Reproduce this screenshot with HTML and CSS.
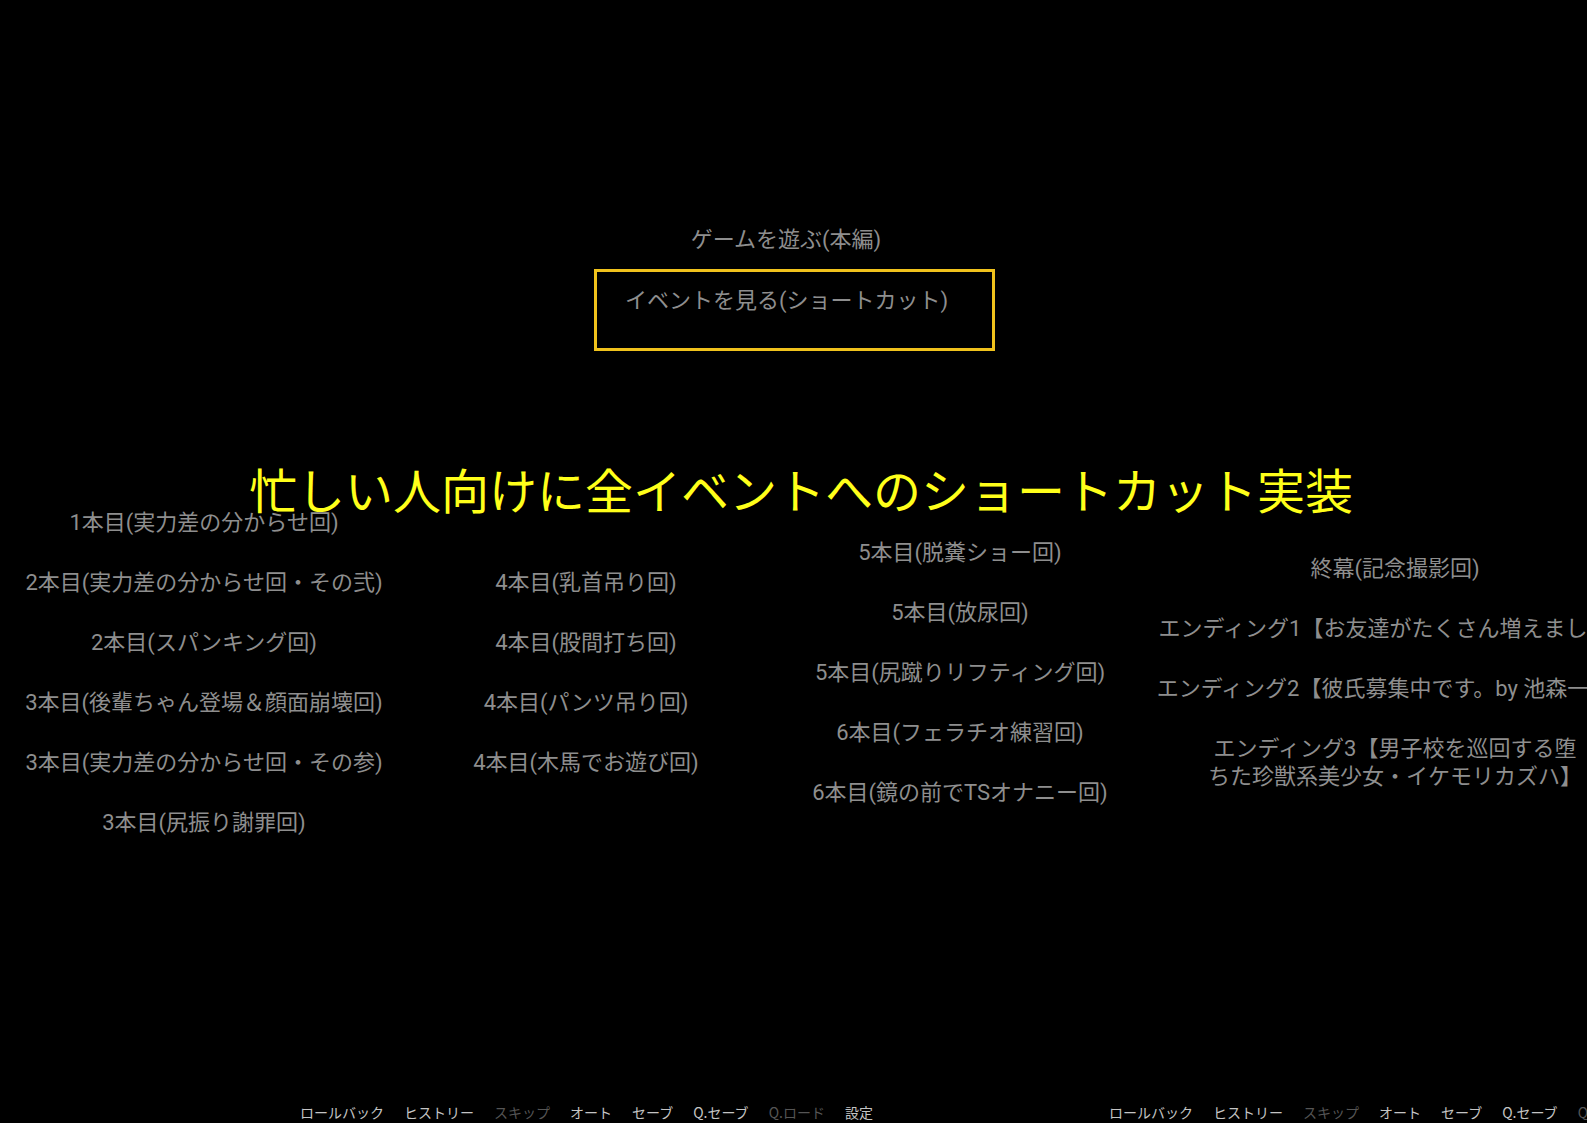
FILE: index.html
```html
<!DOCTYPE html>
<html lang="ja">
<head>
<meta charset="utf-8">
<title>イベントを見る</title>
<link rel="stylesheet" href="styles.css">
</head>
<body>
<div class="screen">
  <div class="top">
    <div class="item">ゲームを遊ぶ(本編)</div>
    <div class="focus"><span class="item">イベントを見る(ショートカット)</span></div>
  </div>

  <div class="columns">
    <div class="col c1">
      <div class="item">1本目(実力差の分からせ回)</div>
      <div class="item">2本目(実力差の分からせ回・その弐)</div>
      <div class="item">2本目(スパンキング回)</div>
      <div class="item">3本目(後輩ちゃん登場＆顔面崩壊回)</div>
      <div class="item">3本目(実力差の分からせ回・その参)</div>
      <div class="item">3本目(尻振り謝罪回)</div>
    </div>
    <div class="col c2">
      <div class="item">4本目(乳首吊り回)</div>
      <div class="item">4本目(股間打ち回)</div>
      <div class="item">4本目(パンツ吊り回)</div>
      <div class="item">4本目(木馬でお遊び回)</div>
    </div>
    <div class="col c3">
      <div class="item">5本目(脱糞ショー回)</div>
      <div class="item">5本目(放尿回)</div>
      <div class="item">5本目(尻蹴りリフティング回)</div>
      <div class="item">6本目(フェラチオ練習回)</div>
      <div class="item">6本目(鏡の前でTSオナニー回)</div>
    </div>
    <div class="col c4">
      <div class="item">終幕(記念撮影回)</div>
      <div class="item">エンディング1【お友達がたくさん増えました】</div>
      <div class="item">エンディング2【彼氏募集中です。by 池森一葉】</div>
      <div class="item">エンディング3【男子校を巡回する堕<br>ちた珍獣系美少女・イケモリカズハ】</div>
    </div>
  </div>

  <div class="headline">忙しい人向けに全イベントへのショートカット実装</div>

  <div class="quickbar">
    <div class="qgroup">
      <span class="q">ロールバック</span>
      <span class="q">ヒストリー</span>
      <span class="q off">スキップ</span>
      <span class="q">オート</span>
      <span class="q">セーブ</span>
      <span class="q">Q.セーブ</span>
      <span class="q off">Q.ロード</span>
      <span class="q">設定</span>
    </div>
    <div class="qgroup">
      <span class="q">ロールバック</span>
      <span class="q">ヒストリー</span>
      <span class="q off">スキップ</span>
      <span class="q">オート</span>
      <span class="q">セーブ</span>
      <span class="q">Q.セーブ</span>
      <span class="q off">Q.ロード</span>
      <span class="q">設定</span>
    </div>
  </div>
</div>
</body>
</html>
```

FILE: styles.css
```css
html, body {
  margin: 0;
  padding: 0;
  background: #000;
}

body {
  width: 1587px;
  height: 1123px;
  overflow: hidden;
  font-family: Roboto, "Noto Sans CJK JP", sans-serif;
}

.screen {
  position: relative;
  width: 1587px;
  height: 1123px;
  overflow: hidden;
}

.item {
  font-size: 22px;
  line-height: 28px;
  color: #8e8e8e;
  white-space: nowrap;
  text-align: center;
}

.top {
  width: 1572px;
  padding-top: 226px;
  display: flex;
  flex-direction: column;
  align-items: center;
}

.focus {
  box-sizing: border-box;
  width: 401px;
  height: 82px;
  margin-top: 15px;
  margin-left: 17px;
  border: 3px solid #f0c21c;
  padding: 15px 0 0 28px;
  display: flex;
  align-items: flex-start;
}

.columns {
  margin-top: 122px;
  height: 400px;
  display: flex;
  align-items: center;
}

.col {
  display: flex;
  flex-direction: column;
  align-items: center;
  gap: 32px;
  flex: none;
}

.c1 { width: 408px; }
.c2 { width: 356px; }
.c3 { width: 392px; }
.c4 { width: 478px; }

.headline {
  position: absolute;
  left: 249px;
  top: 458px;
  font-family: "Noto Sans CJK JP", sans-serif;
  font-size: 48px;
  line-height: 60px;
  color: #ffff1a;
  white-space: nowrap;
}

.quickbar {
  position: absolute;
  left: 0;
  bottom: 1px;
  padding-left: 300px;
  display: flex;
}

.qgroup {
  width: 809px;
  flex: none;
  display: flex;
  gap: 20px;
}

.q {
  font-family: "Noto Sans CJK JP", sans-serif;
  font-size: 14px;
  line-height: 20px;
  color: #c4c4c4;
  white-space: nowrap;
}

.q.off {
  color: #555;
}
```
